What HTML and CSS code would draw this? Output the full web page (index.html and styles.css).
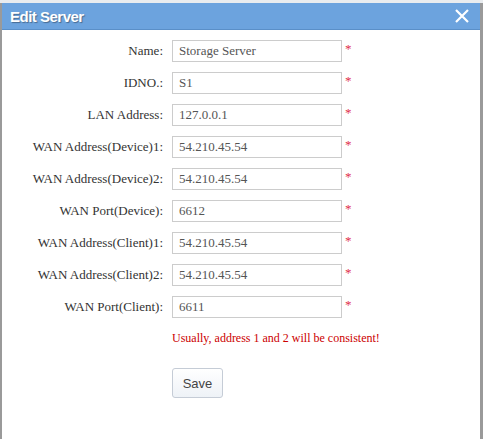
FILE: index.html
```html
<!DOCTYPE html>
<html>
<head>
<meta charset="utf-8">
<link rel="stylesheet" href="styles.css">
</head>
<body>
<div class="strip"></div>
<div class="dialog">
  <div class="header">
    <span class="title">Edit Server</span>
    <svg class="close" width="14" height="14" viewBox="0 0 14 14"><path d="M1 1 L13 13 M13 1 L1 13" stroke="#fff" stroke-width="2.2" fill="none"/></svg>
  </div>
  <div class="content">
    <div class="form">
      <label class="lbl">Name:</label><div class="input">Storage Server</div><span class="req">*</span>
      <label class="lbl">IDNO.:</label><div class="input">S1</div><span class="req">*</span>
      <label class="lbl">LAN Address:</label><div class="input">127.0.0.1</div><span class="req">*</span>
      <label class="lbl">WAN Address(Device)1:</label><div class="input">54.210.45.54</div><span class="req">*</span>
      <label class="lbl">WAN Address(Device)2:</label><div class="input">54.210.45.54</div><span class="req">*</span>
      <label class="lbl">WAN Port(Device):</label><div class="input">6612</div><span class="req">*</span>
      <label class="lbl">WAN Address(Client)1:</label><div class="input">54.210.45.54</div><span class="req">*</span>
      <label class="lbl">WAN Address(Client)2:</label><div class="input">54.210.45.54</div><span class="req">*</span>
      <label class="lbl">WAN Port(Client):</label><div class="input">6611</div><span class="req">*</span>
    </div>
    <div class="note">Usually, address 1 and 2 will be consistent!</div>
    <div class="actions"><button class="save">Save</button></div>
  </div>
</div>
</body>
</html>
```
FILE: styles.css
```css
html, body {
  margin: 0;
  padding: 0;
}
body {
  background: #fff;
  width: 483px;
  height: 439px;
  overflow: hidden;
}
.strip {
  height: 3px;
  background: #e9ecef;
}
.dialog {
  height: 436px;
  box-sizing: border-box;
  border-left: 2px solid #9a9a9a;
  border-right: 3px solid #9a9a9a;
  background: #fff;
}
.header {
  height: 26px;
  background: #6ca3de;
  display: flex;
  align-items: center;
  justify-content: space-between;
  padding: 0 11px 0 8px;
  border-bottom: 1px solid #5a8fc8;
}
.title {
  font-family: "Liberation Sans", Arial, sans-serif;
  font-weight: bold;
  font-size: 15px;
  letter-spacing: -0.5px;
  color: #fff;
  text-shadow: 1px 1px 1px rgba(0,0,0,0.35);
}
.close {
  display: block;
}
.content {
  padding-top: 10px;
  font-family: "Liberation Serif", "DejaVu Serif", serif;
  font-size: 13px;
}
.form {
  display: grid;
  grid-template-columns: 161px 170px auto;
  column-gap: 9px;
  row-gap: 10px;
  align-items: center;
}
.lbl {
  font-family: "Liberation Serif", "DejaVu Serif", serif;
  text-align: right;
  color: #333;
}
.input {
  font-family: "Liberation Serif", "DejaVu Serif", serif;
  height: 22px;
  box-sizing: border-box;
  border: 1px solid #ccc;
  padding: 0 6px;
  line-height: 20px;
  color: #555;
  background: #fff;
}
.req {
  color: #e0304a;
  font-size: 13px;
  margin-left: -6px;
  margin-top: -4px;
}
.note {
  font-family: "Liberation Serif", "DejaVu Serif", serif;
  margin: 13px 0 0 170px;
  color: #cc0000;
  font-size: 12px;
}
.actions {
  margin: 22px 0 0 170px;
}
.save {
  width: 51px;
  height: 30px;
  border: 1px solid #c5ccd6;
  border-radius: 3px;
  background: linear-gradient(#ffffff, #eef2f7);
  font-family: "Liberation Sans", Arial, sans-serif;
  font-size: 13px;
  color: #444;
  padding: 0;
}
```
